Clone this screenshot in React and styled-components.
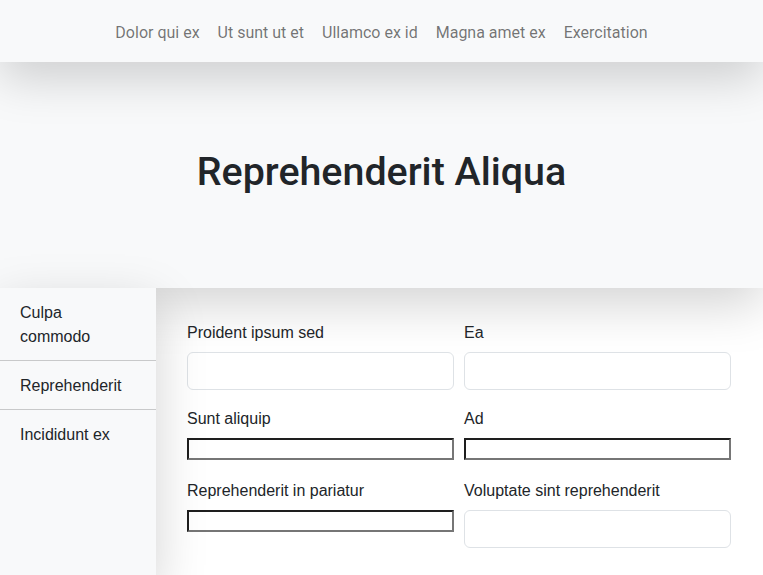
import React from "react";
import styled, { createGlobalStyle } from "styled-components";

const GlobalStyle = createGlobalStyle`
  html, body {
    margin: 0;
    padding: 0;
    background: #ffffff;
    font-family: "Liberation Sans", Arial, sans-serif;
    font-size: 16px;
    line-height: 1.5;
    color: #212529;
  }
  * { box-sizing: border-box; }
`;

const NavBar = styled.nav`
  position: sticky;
  top: 0;
  z-index: 10;
  height: 62px;
  background: #f8f9fa;
  box-shadow: 0 1rem 3rem rgba(0, 0, 0, 0.175);
  display: flex;
  align-items: center;
  justify-content: center;
  padding-top: 4px;
`;

const NavLinks = styled.ul`
  list-style: none;
  margin: 0;
  padding: 0;
  display: flex;
`;

const NavLink = styled.a`
  display: block;
  padding: 8px 9px;
  font-family: Roboto, "Liberation Sans", sans-serif;
  font-size: 16px;
  color: rgba(0, 0, 0, 0.55);
  text-decoration: none;
`;

const Hero = styled.header`
  background: #f8f9fa;
  box-shadow: 0 1rem 3rem rgba(0, 0, 0, 0.175);
  padding: 86px 16px 92px;
  text-align: center;
`;

const Title = styled.h1`
  margin: 0;
  font-family: Roboto, "Liberation Sans", sans-serif;
  font-weight: 500;
  font-size: 39.4px;
  line-height: 48px;
  color: #212529;
`;

const Layout = styled.div`
  display: flex;
  align-items: stretch;
`;

const Sidebar = styled.aside`
  position: relative;
  z-index: 1;
  width: 156px;
  flex: 0 0 156px;
  background: #f8f9fa;
  box-shadow: 0 1rem 3rem rgba(0, 0, 0, 0.175);
`;

const SideItem = styled.a`
  display: block;
  padding: 13px 20px 11px;
  color: #212529;
  text-decoration: none;
  border-bottom: ${(p) => (p.$last ? "none" : "1px solid #c8c9ca")};
`;

const Main = styled.main`
  flex: 1;
  padding: 32px 32px 32px 31px;
`;

const FormGrid = styled.form`
  display: grid;
  grid-template-columns: 1fr 1fr;
  column-gap: 10px;
  row-gap: 16px;
  align-items: start;
`;

const Field = styled.div`
  display: flex;
  flex-direction: column;
`;

const Label = styled.label`
  display: block;
  margin-bottom: 8px;
  padding-top: 1px;
  font-size: 16px;
  line-height: 23px;
  color: #212529;
`;

const TextInput = styled.input`
  display: block;
  width: 100%;
  height: 38px;
  padding: 6px 12px;
  font-size: 16px;
  font-family: inherit;
  background: #ffffff;
  border: 1px solid #dee2e6;
  border-radius: 6px;
  outline: none;
`;

const PlainInput = styled.input`
  display: block;
  width: 100%;
  height: 22px;
  margin-bottom: 2px;
  padding: 1px 2px;
  font-family: "Liberation Sans", Arial, sans-serif;
  font-size: 13.33px;
  background: #ffffff;
  border-width: 2px;
  border-style: solid;
  border-color: #1e1e1e #767676 #767676 #1e1e1e;
  border-radius: 0;
  outline: none;
`;

const navItems = [
  "Dolor qui ex",
  "Ut sunt ut et",
  "Ullamco ex id",
  "Magna amet ex",
  "Exercitation",
];

const sideItems = ["Culpa commodo", "Reprehenderit", "Incididunt ex"];

const fields = [
  { label: "Proident ipsum sed", plain: false },
  { label: "Ea", plain: false },
  { label: "Sunt aliquip", plain: true },
  { label: "Ad", plain: true },
  { label: "Reprehenderit in pariatur", plain: true },
  { label: "Voluptate sint reprehenderit", plain: false },
];

export default function App() {
  return (
    <>
      <GlobalStyle />
      <NavBar>
        <NavLinks>
          {navItems.map((n) => (
            <li key={n}>
              <NavLink href="#">{n}</NavLink>
            </li>
          ))}
        </NavLinks>
      </NavBar>
      <Hero>
        <Title>Reprehenderit Aliqua</Title>
      </Hero>
      <Layout>
        <Sidebar>
          {sideItems.map((s, i) => (
            <SideItem key={s} href="#" $last={i === sideItems.length - 1}>
              {s}
            </SideItem>
          ))}
        </Sidebar>
        <Main>
          <FormGrid onSubmit={(e) => e.preventDefault()}>
            {fields.map((f, i) => (
              <Field key={f.label}>
                <Label htmlFor={`f${i}`}>{f.label}</Label>
                {f.plain ? (
                  <PlainInput id={`f${i}`} type="text" />
                ) : (
                  <TextInput id={`f${i}`} type="text" />
                )}
              </Field>
            ))}
          </FormGrid>
        </Main>
      </Layout>
    </>
  );
}
